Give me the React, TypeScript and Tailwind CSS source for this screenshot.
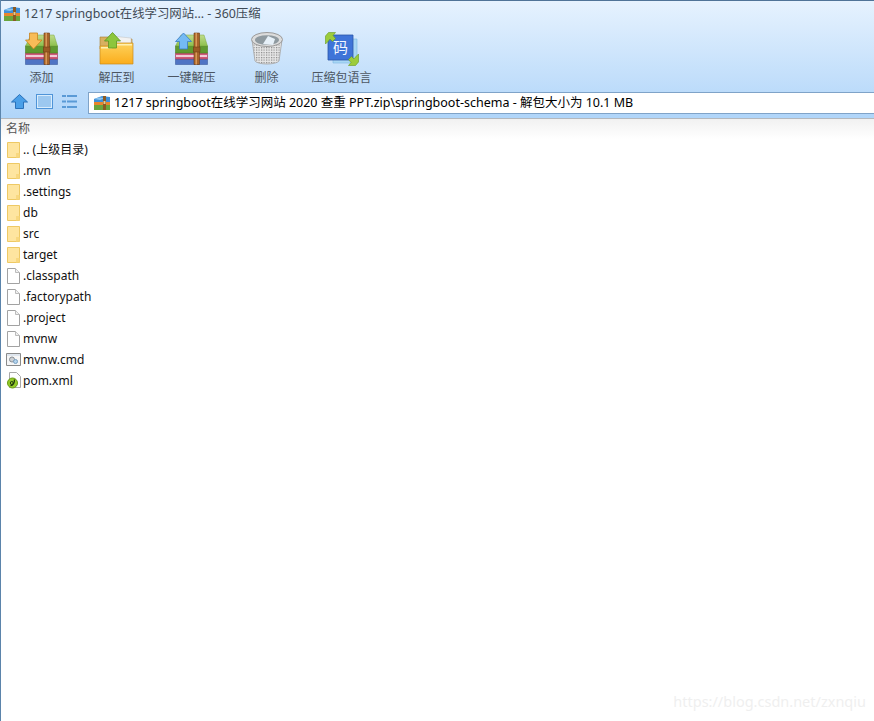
import type { ReactNode } from "react";

const font = { fontFamily: '"Noto Sans", "Noto Sans CJK SC", sans-serif' };

function ArchiveIcon() {
  return (
    <svg width="16" height="15" viewBox="0 0 16 15">
      <path d="M0 3l8-3 8 1v5H0z" fill="#3f8fd8" />
      <path d="M0 3l5-1.500 6 .5-5 2z" fill="#8cc6f0" />
      <path d="M0 6h16v3H0z" fill="#e8862c" />
      <path d="M0 9h16v5H0z" fill="#6aa53c" />
      <path d="M9 0h3v14H9z" fill="#8a5a24" />
      <path d="M9.500 5h2v3h-2z" fill="#e9c98a" />
    </svg>
  );
}

function BooksBase({ children }: { children: ReactNode }) {
  return (
    <svg width="34" height="33" viewBox="0 0 34 33">
      <defs>
        <linearGradient id="coverTop" x1="0" y1="0" x2="0" y2="1">
          <stop offset="0" stopColor="#c0dc8c" />
          <stop offset="1" stopColor="#8cc04c" />
        </linearGradient>
      </defs>
      <path d="M0.500 27h32v5.500H0.500z" fill="#4f74c4" stroke="#3c5a9c" strokeWidth="0.6" />
      <path d="M0.500 21h32v6H0.500z" fill="#cf5a7a" stroke="#a33c58" strokeWidth="0.6" />
      <path d="M1 23h31v2H1z" fill="#f0ccd6" />
      <path d="M0.500 14h32v7H0.500z" fill="#5f9a30" stroke="#4d7c24" strokeWidth="0.6" />
      <path d="M0.500 14L6 3h23l3.500 11z" fill="url(#coverTop)" stroke="#7aa640" strokeWidth="0.5" />
      <path d="M19 1h5.500v31.500H19z" fill="#a8642a" stroke="#6e3d14" strokeWidth="0.6" />
      <path d="M20.500 1h1.500v31.500h-1.500z" fill="#d89a58" />
      <path d="M18.500 15h6.500v5h-6.500z" fill="#9a5a24" stroke="#6e3d14" strokeWidth="0.6" />
      {children}
    </svg>
  );
}

function AddIcon() {
  return (
    <BooksBase>
      <path d="M4.500 1h8v7h4.500L8.500 17 0.500 8h4z" fill="#f8bc58" stroke="#c98420" strokeWidth="0.8" />
    </BooksBase>
  );
}

function OneKeyIcon() {
  return (
    <BooksBase>
      <path d="M8.500 1l8 8.500h-4V17h-8V9.500h-4z" fill="#74baf4" stroke="#3a7cc4" strokeWidth="0.8" />
    </BooksBase>
  );
}

function ExtractIcon() {
  return (
    <svg width="35" height="33" viewBox="0 0 35 33">
      <defs>
        <linearGradient id="folderFront" x1="0" y1="0" x2="0" y2="1">
          <stop offset="0" stopColor="#fdd25c" />
          <stop offset="1" stopColor="#fbad1c" />
        </linearGradient>
      </defs>
      <path d="M1 5h10l2 2h20v10H1z" fill="#d8b060" stroke="#a87c2c" strokeWidth="0.6" />
      <path d="M12 4l20 2v12H12z" fill="#f2f2f2" stroke="#c8c8c8" strokeWidth="0.6" />
      <path d="M1 14h11l4-3h18v21H1z" fill="url(#folderFront)" stroke="#c98a1c" strokeWidth="0.7" />
      <path d="M2 15h10l4-3h17v1.500H16.500l-4 3H2z" fill="#fff0b0" />
      <path d="M13.500 0.500l8 8.500h-4v7h-8V9h-4z" fill="#8cc63c" stroke="#5e9420" strokeWidth="0.8" />
    </svg>
  );
}

function DeleteIcon() {
  return (
    <svg width="32" height="33" viewBox="0 0 32 33">
      <defs>
        <pattern id="mesh" width="2.500" height="2.500" patternUnits="userSpaceOnUse">
          <rect width="2.500" height="2.500" fill="#e6e6e6" />
          <rect width="1.200" height="1.200" fill="#8a8a8a" />
        </pattern>
      </defs>
      <path d="M1 8l3 21c3 4 21 4 24 0l3-21z" fill="url(#mesh)" stroke="#a4a4a4" strokeWidth="0.8" />
      <ellipse cx="16" cy="7.500" rx="15.500" ry="7" fill="#dcdcdc" stroke="#9a9a9a" />
      <ellipse cx="16" cy="8" rx="12" ry="4.800" fill="#8f9aa0" />
      <path d="M12 12l5-8 7 3-2 6z" fill="#e6f0f8" />
    </svg>
  );
}

function LanguageIcon() {
  return (
    <svg width="34" height="34" viewBox="0 0 34 34">
      <path d="M8 7h24v24H8z" fill="#a9d7f5" stroke="#7cb6e0" strokeWidth="0.6" />
      <path d="M3 3h25v25H3z" fill="#3f74d8" stroke="#2c55a8" strokeWidth="0.8" />
      <text x="15.500" y="21" textAnchor="middle" fontSize="15" fill="#f2f6ff" style={{ fontFamily: '"Noto Sans CJK SC", sans-serif' }}>
        码
      </text>
      <path d="M0.500 12V4l3-3.500h7l-2.500 3 2.500 3-3 3-2.500-2.500-2 2.500z" fill="#9ccc3c" stroke="#689a20" strokeWidth="0.6" />
      <path d="M33.500 22v8l-3 3.500h-7l2.500-3-2.500-3 3-3 2.500 2.500 2-2.500z" fill="#9ccc3c" stroke="#689a20" strokeWidth="0.6" />
    </svg>
  );
}

function FolderIcon() {
  return (
    <svg width="13" height="16" viewBox="0 0 13 16">
      <path d="M.5.500h12v15H.5z" fill="#fee5a0" stroke="#eec964" />
      <path d="M9 11h3.500v4.500H9z" fill="#f8d880" />
    </svg>
  );
}

function FileIcon() {
  return (
    <svg width="13" height="16" viewBox="0 0 13 16">
      <path d="M.5.500h8l4 4v11H.5z" fill="#fff" stroke="#a2a2a2" />
      <path d="M8.500.500v4h4" fill="#f0f0f0" stroke="#bcbcbc" />
    </svg>
  );
}

function CmdIcon() {
  return (
    <svg width="15" height="13" viewBox="0 0 15 13">
      <path d="M.5.500h14v12H.5z" fill="#f6f6f6" stroke="#8a8a8a" />
      <path d="M1 1h13v2H1z" fill="#dfe6ee" />
      <circle cx="6" cy="6.500" r="2.500" fill="#ccd0d4" stroke="#8a9096" />
      <circle cx="9.500" cy="8.500" r="2" fill="#b4d4ee" stroke="#7aa0c0" />
    </svg>
  );
}

function PomIcon() {
  return (
    <svg width="14" height="17" viewBox="0 0 14 17">
      <path d="M2.500.500h7l4 4v11h-11z" fill="#fff" stroke="#a8a8a8" />
      <circle cx="5.500" cy="11" r="5" fill="#94cc28" stroke="#6a9c14" />
      <path d="M3.500 13.500c3 0 4-3 4-6" fill="none" stroke="#20380a" strokeWidth="1.300" />
      <circle cx="4.800" cy="11" r="1.500" fill="none" stroke="#20380a" />
    </svg>
  );
}

const toolbar = [
  { label: "添加", icon: <AddIcon /> },
  { label: "解压到", icon: <ExtractIcon /> },
  { label: "一键解压", icon: <OneKeyIcon /> },
  { label: "删除", icon: <DeleteIcon /> },
  { label: "压缩包语言", icon: <LanguageIcon /> },
];

const rows = [
  { name: ".. (上级目录)", icon: <FolderIcon /> },
  { name: ".mvn", icon: <FolderIcon /> },
  { name: ".settings", icon: <FolderIcon /> },
  { name: "db", icon: <FolderIcon /> },
  { name: "src", icon: <FolderIcon /> },
  { name: "target", icon: <FolderIcon /> },
  { name: ".classpath", icon: <FileIcon /> },
  { name: ".factorypath", icon: <FileIcon /> },
  { name: ".project", icon: <FileIcon /> },
  { name: "mvnw", icon: <FileIcon /> },
  { name: "mvnw.cmd", icon: <CmdIcon /> },
  { name: "pom.xml", icon: <PomIcon /> },
];

export default function App() {
  return (
    <div style={font} className="relative flex h-[721px] w-[874px] flex-col overflow-hidden border-l border-[#5b84ab] bg-white text-[12px] text-black">
      <header className="h-[119px] shrink-0 border-t border-b border-t-[#4f7397] border-b-[#b4b8bd] bg-gradient-to-b from-[#e6f2fe] to-[#b0d5f9]">
        <div className="flex h-[25px] items-center gap-[4px] pt-[2px] pl-[3px] text-[#3f4a55]">
          <ArchiveIcon />
          <span className="text-[12.400px]">1217 springboot在线学习网站... - 360压缩</span>
        </div>
        <div className="flex h-[65px] pl-[3px]">
          {toolbar.map((t) => (
            <div key={t.label} className="flex w-[75px] shrink-0 flex-col items-center text-[12px] text-[#4c5662]">
              <div className="flex h-[44px] items-start pt-[6px]">{t.icon}</div>
              <span className="whitespace-nowrap leading-[16px]">{t.label}</span>
            </div>
          ))}
        </div>
        <div className="flex h-[26px] items-start pt-[1px]">
          <div className="flex w-[87px] items-center pt-[2px] pl-[10px]">
            <svg width="17" height="15" viewBox="0 0 17 15">
              <path d="M8.500 .5L16.500 8H12.500v6.500h-8V8H.5z" fill="#4a9fe8" stroke="#2a70b8" />
            </svg>
            <div className="ml-[8px] h-[15px] w-[17px] border border-[#4f94d8] bg-[#9cc8f0] shadow-[inset_0_0_0_1px_#d8ecfc]" />
            <svg className="ml-[9px]" width="15" height="15" viewBox="0 0 15 15" fill="#5a9ad6">
              <path d="M0 1h4v2H0zM5 1h10v2H5zM0 6.500h4v2H0zM5 6.500h10v2H5zM0 12h4v2H0zM5 12h10v2H5z" />
            </svg>
          </div>
          <div className="flex h-[22px] flex-1 items-center gap-[4px] border border-r-0 border-[#7fa3c8] bg-white pt-[1px] pl-[5px] text-[12.500px] whitespace-nowrap">
            <ArchiveIcon />
            <span>1217 springboot在线学习网站 2020 查重 PPT.zip\springboot-schema - 解包大小为 10.1 MB</span>
          </div>
        </div>
      </header>
      <div className="flex h-[20px] shrink-0 items-center bg-gradient-to-b from-[#f1f1f1] to-white pl-[5px] text-[12px] text-[#555]">
        名称
      </div>
      <ul>
        {rows.map((r) => (
          <li key={r.name} className="flex h-[21px] items-center">
            <span className="flex w-[22px] shrink-0 justify-center pl-[3px]">{r.icon}</span>
            <span className="whitespace-nowrap text-[#111]">{r.name}</span>
          </li>
        ))}
      </ul>
      <span className="absolute right-[8px] bottom-[8px] text-[14.500px] text-[#efefef]">https://blog.csdn.net/zxnqiu</span>
    </div>
  );
}
